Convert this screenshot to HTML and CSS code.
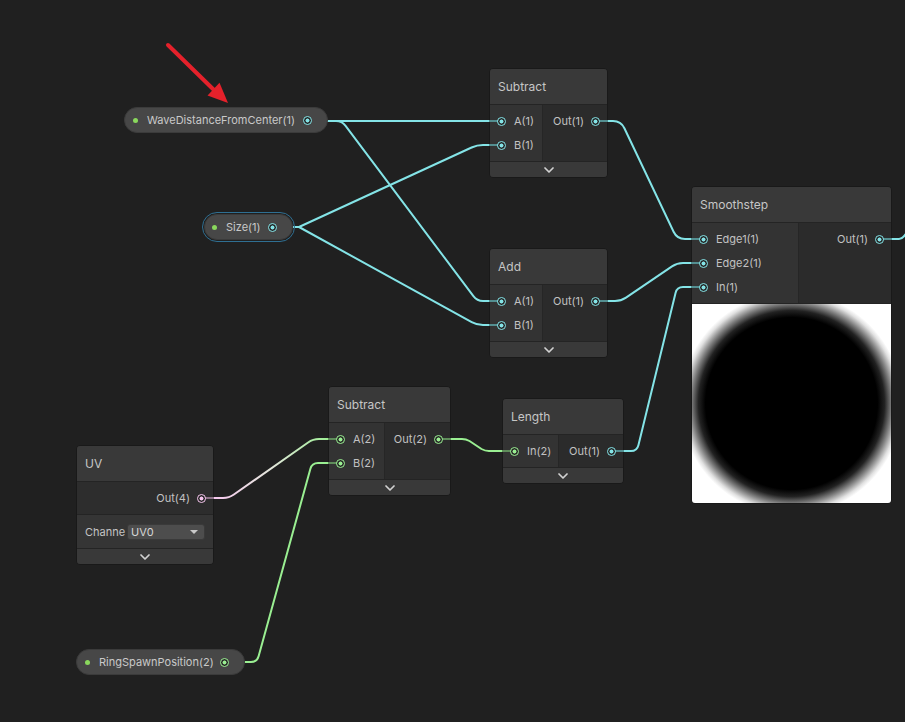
FILE: index.html
```html
<!DOCTYPE html>
<html>
<head>
<meta charset="utf-8">
<link rel="stylesheet" href="styles.css">
</head>
<body>
<div class="graph">
  <svg class="wires" width="905" height="722" viewBox="0 0 905 722">
    <defs>
      <linearGradient id="uvgrad" gradientUnits="userSpaceOnUse" x1="213" y1="0" x2="328" y2="0">
        <stop offset="0" stop-color="#f7c8ef"/>
        <stop offset="0.5" stop-color="#e4e6dc"/>
        <stop offset="1" stop-color="#9eee95"/>
      </linearGradient>
    </defs>
    <g class="cyan-wire">
      <path d="M328 121 L489 121"/>
      <path d="M328 121 L336 121 Q342 121 345.6 125.8 L473.4 296.2 Q477 301 483 301 L489 301"/>
      <path d="M294 227 L299 227 L471.6 147.5 Q477 145 483 145 L489 145"/>
      <path d="M294 227 L299 227 L471.7 322.1 Q477 325 483 325 L489 325"/>
      <path d="M607 121 L613 121 Q621 121 624.4 128.2 L673.6 231.8 Q677 239 685 239 L691 239"/>
      <path d="M607 301 L615 301 Q621 301 626 297.6 L672 266.4 Q677 263 683 263 L691 263"/>
      <path d="M623 451 L631 451 Q637 451 638.4 445.2 L675.6 292.8 Q677 287 683 287 L691 287"/>
      <path d="M891 239 L899 239 Q903 239 907 232"/>
    </g>
    <g class="green-wire">
      <path d="M450 439 L462 439 Q466 439 469.5 441 L481.5 449 Q485 451 489 451 L502 451"/>
      <path d="M245 662 L251 662 Q257 662 258.6 656.2 L310.4 468.8 Q312 463 318 463 L328 463"/>
    </g>
    <path class="uv-wire" d="M213 498 L223 498 Q229 498 233.9 494.5 L308.1 442.5 Q313 439 319 439 L328 439"/>
  </svg>

  <div class="pill p-wave">
    <span class="dot"></span><span class="pill-label">WaveDistanceFromCenter(1)</span><span class="port cyan"></span>
  </div>
  <div class="pill p-size selected">
    <span class="dot"></span><span class="pill-label">Size(1)</span><span class="port cyan"></span>
  </div>
  <div class="pill p-ring">
    <span class="dot"></span><span class="pill-label">RingSpawnPosition(2)</span><span class="port green"></span>
  </div>

  <div class="node n-sub1">
    <div class="node-title">Subtract</div>
    <div class="node-body">
      <div class="inputs">
        <div class="port-row cyan"><span class="port"></span><span>A(1)</span></div>
        <div class="port-row cyan"><span class="port"></span><span>B(1)</span></div>
      </div>
      <div class="outputs">
        <div class="port-row cyan"><span>Out(1)</span><span class="port"></span></div>
      </div>
    </div>
    <div class="node-footer"><svg width="10" height="6" viewBox="0 0 10 6"><path d="M1 1 L5 5 L9 1"/></svg></div>
  </div>

  <div class="node n-add">
    <div class="node-title">Add</div>
    <div class="node-body">
      <div class="inputs">
        <div class="port-row cyan"><span class="port"></span><span>A(1)</span></div>
        <div class="port-row cyan"><span class="port"></span><span>B(1)</span></div>
      </div>
      <div class="outputs">
        <div class="port-row cyan"><span>Out(1)</span><span class="port"></span></div>
      </div>
    </div>
    <div class="node-footer"><svg width="10" height="6" viewBox="0 0 10 6"><path d="M1 1 L5 5 L9 1"/></svg></div>
  </div>

  <div class="node n-smooth">
    <div class="node-title">Smoothstep</div>
    <div class="node-body">
      <div class="inputs">
        <div class="port-row cyan"><span class="port"></span><span>Edge1(1)</span></div>
        <div class="port-row cyan"><span class="port"></span><span>Edge2(1)</span></div>
        <div class="port-row cyan"><span class="port"></span><span>In(1)</span></div>
      </div>
      <div class="outputs">
        <div class="port-row cyan"><span>Out(1)</span><span class="port"></span></div>
      </div>
    </div>
    <div class="preview"></div>
  </div>

  <div class="node n-sub2">
    <div class="node-title">Subtract</div>
    <div class="node-body">
      <div class="inputs">
        <div class="port-row green"><span class="port"></span><span>A(2)</span></div>
        <div class="port-row green"><span class="port"></span><span>B(2)</span></div>
      </div>
      <div class="outputs">
        <div class="port-row green"><span>Out(2)</span><span class="port"></span></div>
      </div>
    </div>
    <div class="node-footer"><svg width="10" height="6" viewBox="0 0 10 6"><path d="M1 1 L5 5 L9 1"/></svg></div>
  </div>

  <div class="node n-length">
    <div class="node-title">Length</div>
    <div class="node-body">
      <div class="inputs">
        <div class="port-row green"><span class="port"></span><span>In(2)</span></div>
      </div>
      <div class="outputs">
        <div class="port-row cyan"><span>Out(1)</span><span class="port"></span></div>
      </div>
    </div>
    <div class="node-footer"><svg width="10" height="6" viewBox="0 0 10 6"><path d="M1 1 L5 5 L9 1"/></svg></div>
  </div>

  <div class="node n-uv">
    <div class="node-title">UV</div>
    <div class="node-body">
      <div class="outputs">
        <div class="port-row pink"><span>Out(4)</span><span class="port"></span></div>
      </div>
    </div>
    <div class="uv-control">
      <span class="ctl-label">Channe</span>
      <div class="dropdown"><span>UV0</span><span class="caret"></span></div>
    </div>
    <div class="node-footer"><svg width="10" height="6" viewBox="0 0 10 6"><path d="M1 1 L5 5 L9 1"/></svg></div>
  </div>

  <svg class="annot" width="905" height="722" viewBox="0 0 905 722">
    <line x1="168" y1="45" x2="214" y2="90" stroke="#e5212b" stroke-width="4" stroke-linecap="round"/>
    <polygon points="228,103 207.5,95.5 219.5,82.8" fill="#e5212b"/>
  </svg>
</div>
</body>
</html>
```

FILE: styles.css
```css
html, body {
  margin: 0;
  padding: 0;
  background: #202020;
}

.graph {
  position: relative;
  width: 905px;
  height: 722px;
  overflow: hidden;
  background: #202020;
  font-family: Inter, "Noto Sans", "Liberation Sans", sans-serif;
}

.wires, .annot {
  position: absolute;
  left: 0;
  top: 0;
}
.wires { z-index: 0; }
.annot { z-index: 3; }

.wires path {
  fill: none;
  stroke-width: 2;
  stroke-linecap: round;
  stroke-linejoin: round;
}
.cyan-wire path { stroke: #84e4e7; }
.green-wire path { stroke: #9aef92; }
.uv-wire { stroke: url(#uvgrad); }

/* colour variables */
.cyan  { --c: #84e4e7; --cd: #548f91; }
.green { --c: #9aef92; --cd: #5f8d5b; }
.pink  { --c: #f6c6ee; --cd: #8e7489; }

/* port glyph */
.port {
  flex: none;
  width: 9px;
  height: 9px;
  box-sizing: border-box;
  border-radius: 50%;
  border: 1.5px solid var(--c);
  background: radial-gradient(circle, var(--c) 0 1.7px, #262626 2.3px);
  position: relative;
  z-index: 1;
}

/* property pills */
.pill {
  position: absolute;
  z-index: 1;
  height: 26px;
  box-sizing: border-box;
  border-radius: 13px;
  background: #474747;
  border: 1px solid #3b3b3b;
  display: flex;
  align-items: center;
  padding-left: 8px;
  padding-right: 15px;
  font-size: 11px;
  color: #c9c9c9;
}
.pill .dot {
  flex: none;
  width: 5px;
  height: 5px;
  border-radius: 50%;
  background: #8ad85d;
  margin-right: 9px;
}
.pill .pill-label {
  flex: 1;
  white-space: nowrap;
}
.p-wave { left: 124px; top: 107px; width: 204px; }
.p-size { left: 204px; top: 214px; width: 89px; padding-left: 7px; }
.p-ring { left: 76px; top: 649px; width: 169px; }
.selected {
  outline: 1.5px solid #2f6f92;
  outline-offset: 1px;
}

/* nodes */
.node {
  position: absolute;
  z-index: 1;
  box-sizing: border-box;
  border: 1px solid #191919;
  border-radius: 4px;
  background: #2b2b2b;
  color: #c4c4c4;
}
.node-title {
  height: 35px;
  display: flex;
  align-items: center;
  padding-left: 8px;
  background: #393939;
  font-size: 12px;
  color: #c6c6c6;
  border-bottom: 1px solid #242424;
  border-radius: 3px 3px 0 0;
}
.node-body {
  display: flex;
  border-bottom: 1px solid #242424;
}
.inputs {
  flex: none;
  box-sizing: border-box;
  background: #333333;
  border-right: 1px solid #262626;
  padding: 4px 0 4px;
}
.outputs {
  flex: 1;
  background: #2b2b2b;
  padding: 4px 0 4px;
}
.port-row {
  position: relative;
  height: 24px;
  display: flex;
  align-items: center;
  font-size: 11px;
  color: #c2c2c2;
  white-space: nowrap;
}
.inputs .port-row {
  padding-left: 7px;
  gap: 8px;
}
.inputs .port-row::before {
  content: "";
  position: absolute;
  left: -1px;
  width: 9px;
  top: 11px;
  height: 2px;
  background: var(--cd);
}
.outputs .port-row {
  justify-content: flex-end;
  padding-right: 7px;
  gap: 7px;
}
.outputs .port-row::after {
  content: "";
  position: absolute;
  right: -1px;
  width: 9px;
  top: 11px;
  height: 2px;
  background: var(--cd);
}
.node-footer {
  height: 15px;
  background: #393939;
  display: flex;
  justify-content: center;
  align-items: center;
  border-radius: 0 0 3px 3px;
}
.node-footer svg path {
  fill: none;
  stroke: #d2d2d2;
  stroke-width: 1.7;
  stroke-linecap: round;
  stroke-linejoin: round;
}

.n-sub1 { left: 489px; top: 68px; width: 119px; }
.n-add { left: 489px; top: 248px; width: 119px; }
.n-sub1 .inputs, .n-add .inputs { width: 53px; }

.n-smooth { left: 691px; top: 186px; width: 201px; }
.n-smooth .inputs { width: 107px; }
.preview {
  height: 199px;
  border-radius: 0 0 3px 3px;
  background: radial-gradient(circle at 50% 50%, #000 0, #000 86px, #222 93px, #7f7f7f 100px, #e0e0e0 107px, #fff 111px);
}

.n-sub2 { left: 328px; top: 386px; width: 123px; }
.n-sub2 .inputs { width: 56px; }

.n-length { left: 502px; top: 398px; width: 122px; }
.n-length .inputs { width: 56px; }

.n-uv { left: 76px; top: 445px; width: 138px; }
.n-uv .outputs { background: #2d2d2d; }
.uv-control {
  height: 33px;
  display: flex;
  align-items: center;
  padding-left: 8px;
  background: #353535;
  border-bottom: 1px solid #242424;
  font-size: 11px;
  color: #c4c4c4;
}
.ctl-label {
  width: 42px;
  white-space: nowrap;
}
.dropdown {
  width: 78px;
  height: 16px;
  box-sizing: border-box;
  border-radius: 3px;
  background: #4d4d4d;
  border: 1px solid #3a3a3a;
  display: flex;
  align-items: center;
  justify-content: space-between;
  padding: 0 6px 0 3px;
  color: #d6d6d6;
  font-size: 11px;
}
.caret {
  width: 0;
  height: 0;
  border-left: 4px solid transparent;
  border-right: 4px solid transparent;
  border-top: 4px solid #c8c8c8;
}
```
